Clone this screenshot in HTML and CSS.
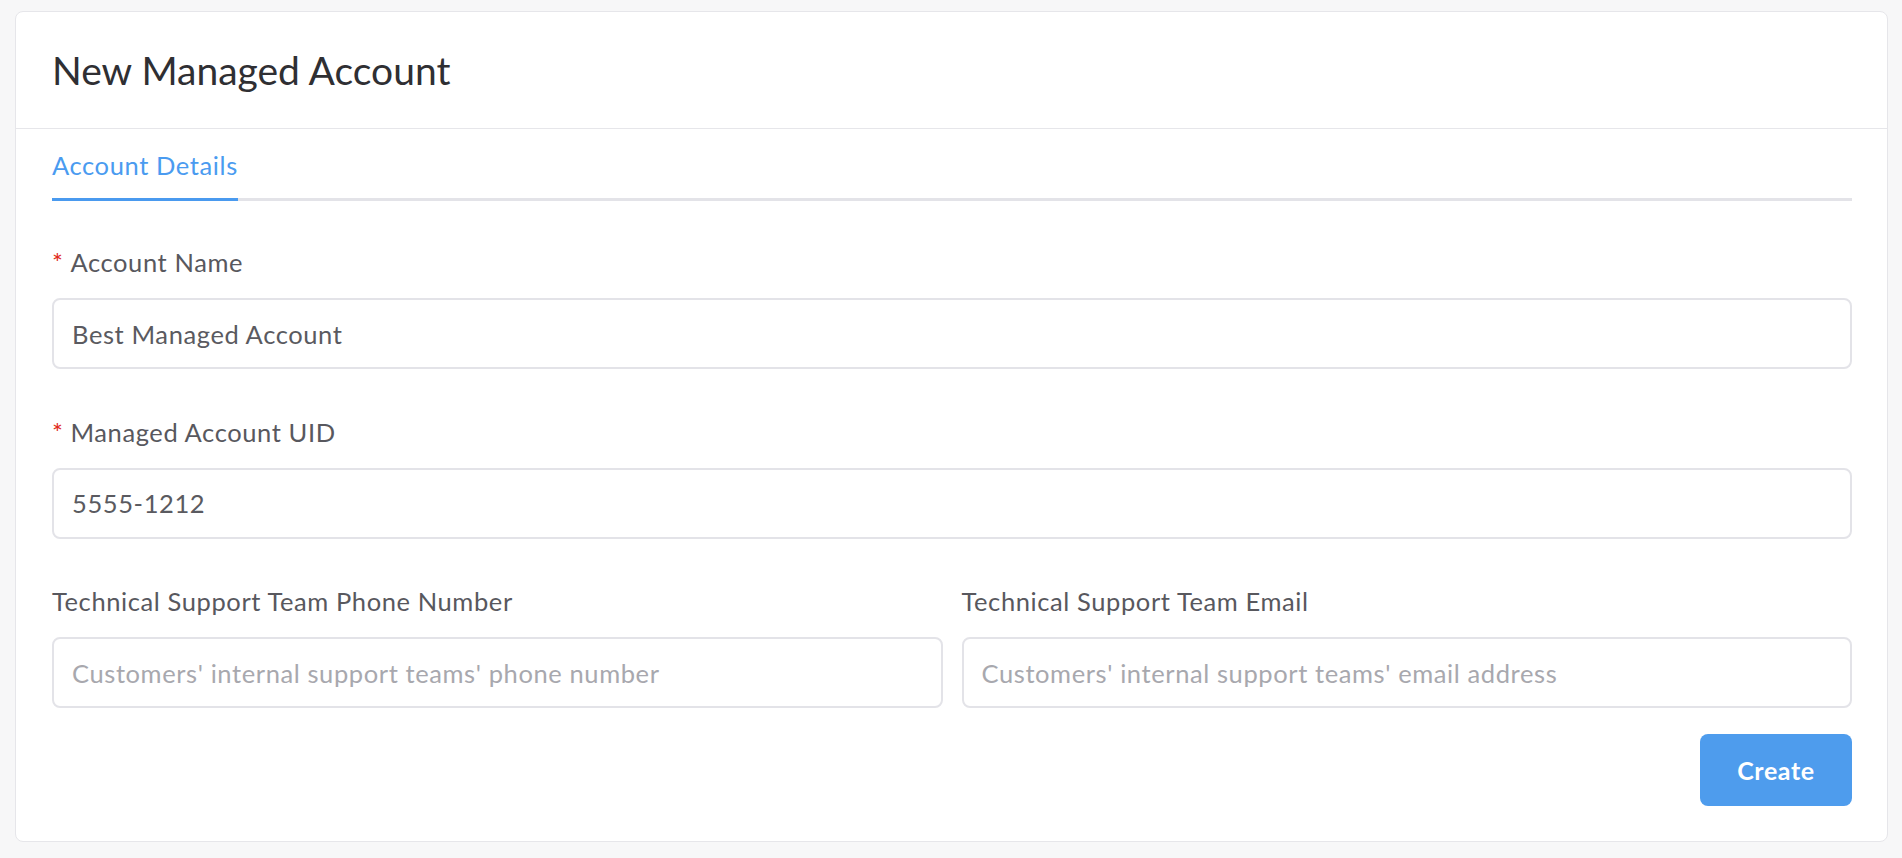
FILE: index.html
```html
<!DOCTYPE html>
<html lang="en">
<head>
<meta charset="utf-8">
<title>New Managed Account</title>
<link rel="stylesheet" href="styles.css">
</head>
<body>
<div class="card">
  <div class="card-header">
    <h1 class="title">New Managed Account</h1>
  </div>
  <div class="card-body">
    <div class="tabs">
      <div class="tab active">Account Details</div>
    </div>
    <form class="form">
      <div class="field">
        <label class="label"><span class="req">*</span>Account Name</label>
        <input class="input" type="text" value="Best Managed Account">
      </div>
      <div class="field">
        <label class="label"><span class="req">*</span>Managed Account UID</label>
        <input class="input" type="text" value="5555-1212">
      </div>
      <div class="field-row">
        <div class="field">
          <label class="label">Technical Support Team Phone Number</label>
          <input class="input" type="text" placeholder="Customers' internal support teams' phone number">
        </div>
        <div class="field">
          <label class="label">Technical Support Team Email</label>
          <input class="input" type="text" placeholder="Customers' internal support teams' email address">
        </div>
      </div>
      <div class="actions">
        <button class="btn" type="button">Create</button>
      </div>
    </form>
  </div>
</div>
</body>
</html>
```
FILE: styles.css
```css
* { box-sizing: border-box; }
html, body { margin: 0; }
body {
  background: #f7f7f8;
  padding: 11px 14px 16px 15px;
  font-family: "Lato", "Open Sans", sans-serif;
  color: #58585e;
}
.card {
  background: #fff;
  border: 1px solid #e6e6ea;
  border-radius: 8px;
}
.card-header {
  height: 117px;
  display: flex;
  align-items: center;
  padding: 0 36px;
  border-bottom: 1px solid #e6e6ea;
}
.title {
  margin: 0;
  font-size: 39px;
  font-weight: 400;
  color: #2f2f33;
  line-height: 1.2;
}
.card-body {
  padding: 0 35px 35px 36px;
}
.tabs {
  display: flex;
  border-bottom: 3px solid #e3e3e8;
}
.tab {
  font-size: 25.5px;
  letter-spacing: 0.6px;
  line-height: 30px;
  padding: 21px 0 18px;
  color: #4a9bf0;
  margin-bottom: -3px;
}
.tab.active { border-bottom: 3px solid #4a9aef; }
.form { padding-top: 46px; }
.field { margin-bottom: 47.5px; display: flex; flex-direction: column; }
.label {
  font-size: 25.5px;
  letter-spacing: 0.6px;
  line-height: 30px;
  margin-bottom: 21px;
  color: #58585e;
}
.req { color: #e02a20; margin-right: 7px; }
.input {
  height: 71px;
  border: 2px solid #e3e3e8;
  border-radius: 8px;
  padding: 0 18px;
  font-family: inherit;
  font-size: 25.5px;
  letter-spacing: 0.6px;
  color: #5a5a60;
  outline: none;
  width: 100%;
}
.input::placeholder { color: #a8a8ae; }
.field-row {
  display: grid;
  grid-template-columns: 1fr 1fr;
  column-gap: 19px;
}
.field-row .field { margin-bottom: 26px; }
.actions { display: flex; justify-content: flex-end; }
.btn {
  width: 152px;
  height: 72px;
  border: none;
  border-radius: 8px;
  background: #4e9ced;
  color: #fff;
  font-family: inherit;
  font-size: 25px;
  letter-spacing: 0.6px;
  font-weight: 700;
}
```
